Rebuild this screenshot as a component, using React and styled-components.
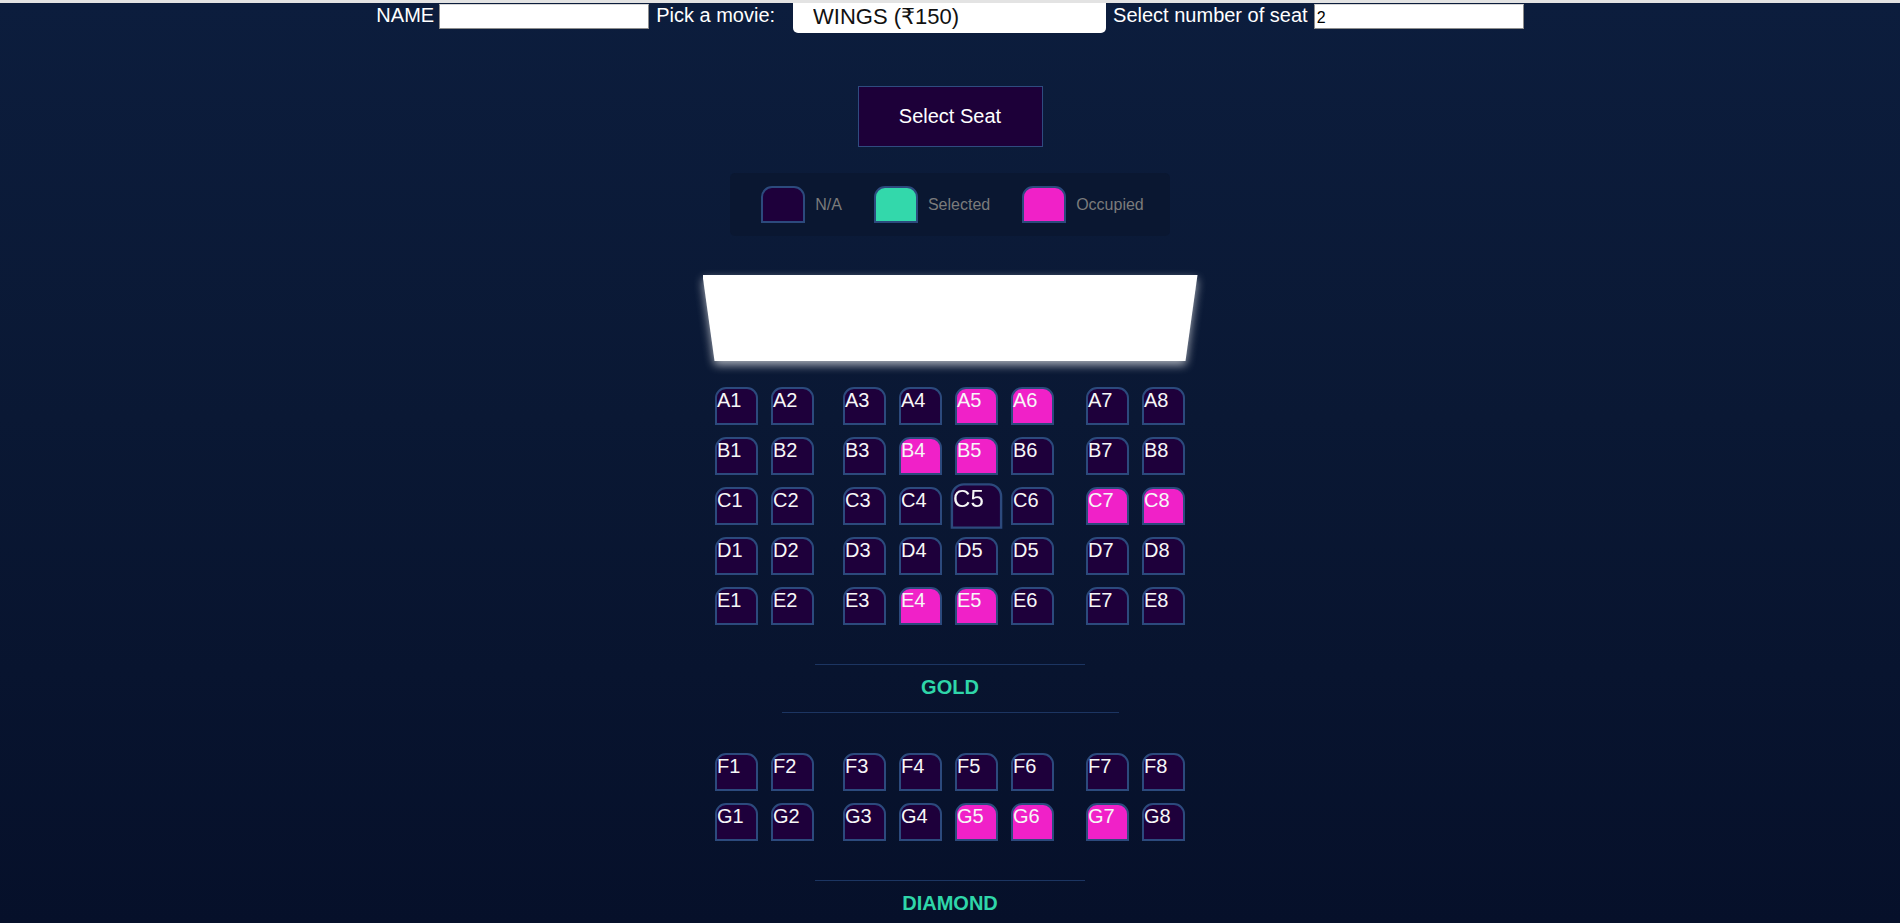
import React from 'react';
import styled, { createGlobalStyle } from 'styled-components';

const GlobalStyle = createGlobalStyle`
    html, body {
        margin: 0;
        padding: 0;
        height: 100%;
        overflow: hidden;
    }
    body {
        font-family: 'Liberation Sans', Arial, 'DejaVu Sans', sans-serif;
        background: #e3e3e3;
    }
`;

const Page = styled.div`
    box-sizing: border-box;
    height: 100vh;
    border-top: 3px solid #e3e3e3;
    background: linear-gradient(180deg, #0c1d3d 0%, #0a1834 45%, #06102a 100%);
    display: flex;
    flex-direction: column;
    align-items: center;
    overflow: hidden;

    & > * {
        flex-shrink: 0;
    }
`;

const TopBar = styled.div`
    display: flex;
    align-items: flex-start;
    justify-content: center;
    height: 30px;
`;

const Label = styled.label`
    color: #ffffff;
    font-size: 20px;
    line-height: 23px;
    margin-top: 1px;
    margin-right: ${(p) => p.$gap || 5}px;
    margin-left: ${(p) => p.$lead || 0}px;
    white-space: nowrap;
`;

const TextInput = styled.input`
    box-sizing: border-box;
    width: 210px;
    height: 25px;
    margin-top: 1px;
    padding: 2px 2px 0;
    border: 1px solid #8d8d8d;
    border-top-color: #d6d6d6;
    background: #ffffff;
    font-family: 'Liberation Sans', Arial, sans-serif;
    font-size: 16px;
    color: #000;
    outline: none;
`;

const MovieSelect = styled.select`
    appearance: none;
    box-sizing: border-box;
    width: 313px;
    height: 30px;
    margin-left: 13px;
    padding: 0 0 4px 20px;
    border: none;
    border-radius: 0 0 5px 5px;
    background: #ffffff;
    color: #111;
    font-family: 'Liberation Sans', 'DejaVu Sans', sans-serif;
    font-size: 22px;
    outline: none;
`;

const SelectButton = styled.button`
    box-sizing: border-box;
    margin-top: 53px;
    width: 185px;
    height: 61px;
    background: #1d0039;
    border: 1px solid #2f4b80;
    color: #ffffff;
    font-family: 'Liberation Sans', Arial, sans-serif;
    font-size: 20px;
    cursor: pointer;
`;

const Legend = styled.ul`
    list-style: none;
    margin: 26px 0 0;
    box-sizing: border-box;
    height: 63px;
    padding: 0 26px 0 31px;
    display: flex;
    align-items: center;
    gap: 32px;
    background: #0a1731;
    border-radius: 5px;
`;

const LegendItem = styled.li`
    display: flex;
    align-items: center;
    gap: 10px;
    color: #7b7b7b;
    font-size: 16px;
`;

const seatColors = {
    na: '#1e003b',
    selected: '#33d8ab',
    occupied: '#f021c8',
};

const Seat = styled.div`
    box-sizing: border-box;
    flex-shrink: 0;
    width: ${(p) => p.$w || 43}px;
    height: ${(p) => p.$h || 38}px;
    border: 2px solid #2c4a7d;
    border-radius: 11px 11px 0 0;
    background: ${(p) => seatColors[p.$state]};
    color: #f7f7f7;
    font-size: 20px;
    line-height: 23px;
    transform: ${(p) => (p.$hover ? 'scale(1.2)' : 'none')};
    cursor: pointer;
`;

const ScreenGlow = styled.div`
    margin-top: 39px;
    filter: drop-shadow(0 4px 5px rgba(255, 255, 255, 0.65));
`;

const Screen = styled.div`
    width: 495px;
    height: 86px;
    background: #ffffff;
    clip-path: polygon(0 0, 100% 0, calc(100% - 12px) 100%, 12px 100%);
`;

const SeatBlock = styled.div`
    margin-top: ${(p) => p.$top}px;
    display: flex;
    flex-direction: column;
    gap: 12px;
`;

const SeatRow = styled.div`
    display: flex;
    gap: 13px;

    & > :nth-child(2) {
        margin-right: 16px;
    }
    & > :nth-child(6) {
        margin-right: 19px;
    }
`;

const Divider = styled.hr`
    width: ${(p) => p.$w}px;
    height: 1px;
    margin: ${(p) => p.$top}px 0 0;
    border: none;
    background: #1c3562;
`;

const ClassName = styled.h3`
    margin: 11px 0 13px;
    color: #2fd6a9;
    font-size: 20px;
    line-height: 23px;
    font-weight: bold;
`;

const goldRows = [
    ['A1', 'A2', 'A3', 'A4', 'A5', 'A6', 'A7', 'A8'],
    ['B1', 'B2', 'B3', 'B4', 'B5', 'B6', 'B7', 'B8'],
    ['C1', 'C2', 'C3', 'C4', 'C5', 'C6', 'C7', 'C8'],
    ['D1', 'D2', 'D3', 'D4', 'D5', 'D5', 'D7', 'D8'],
    ['E1', 'E2', 'E3', 'E4', 'E5', 'E6', 'E7', 'E8'],
];

const diamondRows = [
    ['F1', 'F2', 'F3', 'F4', 'F5', 'F6', 'F7', 'F8'],
    ['G1', 'G2', 'G3', 'G4', 'G5', 'G6', 'G7', 'G8'],
];

const occupied = ['A5', 'A6', 'B4', 'B5', 'C7', 'C8', 'E4', 'E5', 'G5', 'G6', 'G7'];

function Rows({ rows, top }) {
    return (
        <SeatBlock $top={top}>
            {rows.map((row, r) => (
                <SeatRow key={r}>
                    {row.map((name, i) => (
                        <Seat
                            key={i}
                            $state={occupied.includes(name) ? 'occupied' : 'na'}
                            $hover={name === 'C5'}
                        >
                            {name}
                        </Seat>
                    ))}
                </SeatRow>
            ))}
        </SeatBlock>
    );
}

function App() {
    return (
        <>
            <GlobalStyle />
            <Page>
                <TopBar>
                    <Label>NAME</Label>
                    <TextInput type='text' />
                    <Label $lead={7} $gap={5}>
                        Pick a movie:
                    </Label>
                    <MovieSelect defaultValue='150'>
                        <option value='150'>WINGS (₹150)</option>
                        <option value='200'>AVENGERS (₹200)</option>
                    </MovieSelect>
                    <Label $lead={7} $gap={6}>
                        Select number of seat
                    </Label>
                    <TextInput type='number' defaultValue={2} />
                </TopBar>

                <SelectButton>Select Seat</SelectButton>

                <Legend>
                    <LegendItem>
                        <Seat $state='na' $w={44} $h={37} />
                        N/A
                    </LegendItem>
                    <LegendItem>
                        <Seat $state='selected' $w={44} $h={37} />
                        Selected
                    </LegendItem>
                    <LegendItem>
                        <Seat $state='occupied' $w={44} $h={37} />
                        Occupied
                    </LegendItem>
                </Legend>

                <ScreenGlow>
                    <Screen />
                </ScreenGlow>

                <Rows rows={goldRows} top={26} />
                <Divider $w={270} $top={39} />
                <ClassName>GOLD</ClassName>
                <Divider $w={337} $top={0} />

                <Rows rows={diamondRows} top={40} />
                <Divider $w={270} $top={39} />
                <ClassName>DIAMOND</ClassName>
                <Divider $w={337} $top={0} />
            </Page>
        </>
    );
}

export default App;
